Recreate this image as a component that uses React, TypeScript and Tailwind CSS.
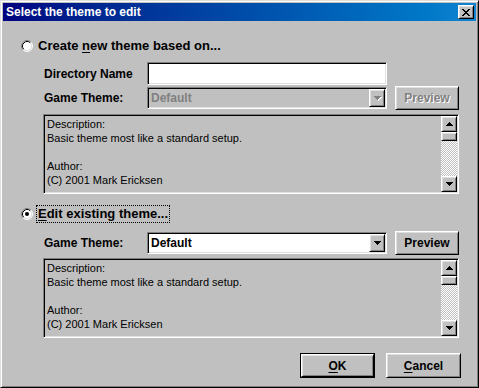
import React from "react";

const raised =
  "border border-t-white border-l-white border-r-black border-b-black shadow-[inset_1px_1px_0_#dfdfdf,inset_-1px_-1px_0_#808080]";
const sunken =
  "border border-t-[#808080] border-l-[#808080] border-r-white border-b-white shadow-[inset_1px_1px_0_#000,inset_-1px_-1px_0_#dfdfdf] p-[1px]";

// pixel arrow, rows of width 7,5,3,1
function Arrow({ dir, color = "#000" }: { dir: "up" | "down"; color?: string }) {
  const rows = [0, 1, 2, 3];
  return (
    <svg width="7" height="4" viewBox="0 0 7 4" shapeRendering="crispEdges">
      {rows.map((r) => (
        <rect
          key={r}
          x={r}
          y={dir === "down" ? r : 3 - r}
          width={7 - r * 2}
          height={1}
          fill={color}
        />
      ))}
    </svg>
  );
}

function CloseGlyph() {
  const px: [number, number, number][] = [
    [0, 0, 2], [6, 0, 2],
    [1, 1, 2], [5, 1, 2],
    [2, 2, 4],
    [3, 3, 2],
    [2, 4, 4],
    [1, 5, 2], [5, 5, 2],
    [0, 6, 2], [6, 6, 2],
  ];
  return (
    <svg width="8" height="7" viewBox="0 0 8 7" shapeRendering="crispEdges">
      {px.map(([x, y, w], i) => (
        <rect key={i} x={x} y={y} width={w} height={1} fill="#000" />
      ))}
    </svg>
  );
}

function Radio({ checked }: { checked?: boolean }) {
  return (
    <svg width="12" height="12" viewBox="0 0 12 12" className="shrink-0">
      <circle cx="6" cy="6" r="5" fill="#fff" />
      <path d="M2.11 9.89 A5.5 5.5 0 0 1 9.89 2.11" fill="none" stroke="#808080" strokeWidth="1" />
      <path d="M9.89 2.11 A5.5 5.5 0 0 1 2.11 9.89" fill="none" stroke="#fff" strokeWidth="1" />
      <path d="M2.82 9.18 A4.5 4.5 0 0 1 9.18 2.82" fill="none" stroke="#000" strokeWidth="1" />
      <path d="M9.18 2.82 A4.5 4.5 0 0 1 2.82 9.18" fill="none" stroke="#dfdfdf" strokeWidth="1" />
      {checked && <circle cx="6" cy="6" r="2" fill="#000" />}
    </svg>
  );
}

function ScrollBar() {
  return (
    <div className="flex h-full w-[16px] flex-col">
      <div className={`${raised} flex h-[16px] items-center justify-center bg-[#c0c0c0]`}>
        <Arrow dir="up" />
      </div>
      <div className={`${raised} h-[9px] bg-[#c0c0c0]`} />
      <div className="flex-1 bg-[image:repeating-conic-gradient(#c0c0c0_0%_25%,#ffffff_0%_50%)] bg-[length:2px_2px]" />
      <div className={`${raised} flex h-[16px] items-center justify-center bg-[#c0c0c0]`}>
        <Arrow dir="down" />
      </div>
    </div>
  );
}

function DescBox() {
  return (
    <div className={`${sunken} ml-[40px] flex h-[80px] w-[416px] bg-[#c0c0c0]`}>
      <div className="flex-1 pl-[2px] pt-[1px] text-[11px] leading-[14px] text-black">
        <div>Description:</div>
        <div>Basic theme most like a standard setup.</div>
        <div>&nbsp;</div>
        <div>Author:</div>
        <div>(C) 2001 Mark Ericksen</div>
      </div>
      <ScrollBar />
    </div>
  );
}

function Combo({ disabled }: { disabled?: boolean }) {
  return (
    <div
      className={`${sunken} flex h-[22px] w-[240px] items-center ${
        disabled ? "bg-[#c0c0c0]" : "bg-white"
      }`}
    >
      <span
        className={`flex-1 pl-[2px] text-[12px] font-bold ${
          disabled ? "text-[#808080]" : "text-black"
        }`}
      >
        Default
      </span>
      <div className={`${raised} flex h-[18px] w-[16px] items-center justify-center bg-[#c0c0c0]`}>
        {disabled ? (
          <span className="relative block h-[4px] w-[7px]">
            <span className="absolute left-[1px] top-[1px]">
              <Arrow dir="down" color="#fff" />
            </span>
            <span className="absolute left-0 top-0">
              <Arrow dir="down" color="#808080" />
            </span>
          </span>
        ) : (
          <Arrow dir="down" />
        )}
      </div>
    </div>
  );
}

function PreviewButton({ disabled }: { disabled?: boolean }) {
  return (
    <div
      className={`${raised} ml-[8px] flex h-[24px] w-[64px] items-center justify-center bg-[#c0c0c0] text-[12px] font-bold ${
        disabled ? "text-[#808080] [text-shadow:1px_1px_0_#fff]" : "text-black"
      }`}
    >
      Preview
    </div>
  );
}

export default function App() {
  return (
    <div
      className="flex h-[388px] w-[479px] flex-col overflow-hidden border border-t-[#dfdfdf] border-l-[#dfdfdf] border-r-black border-b-black bg-[#c0c0c0] p-[2px] shadow-[inset_1px_1px_0_#fff,inset_-1px_-1px_0_#808080] select-none"
      style={{ fontFamily: '"Liberation Sans", Arial, sans-serif' }}
    >
      {/* title bar */}
      <div className="flex h-[18px] shrink-0 items-center bg-linear-to-r from-[#000080] to-[#1084d0] pl-[3px] pr-[2px]">
        <span className="flex-1 text-[12px] font-bold text-white">Select the theme to edit</span>
        <div className={`${raised} flex h-[14px] w-[16px] items-center justify-center bg-[#c0c0c0]`}>
          <CloseGlyph />
        </div>
      </div>

      <div className="flex flex-col text-black">
        {/* create new */}
        <div className="mt-[17px] flex h-[16px] items-center pl-[18px]">
          <Radio />
          <span className="ml-[5px] text-[13px] font-bold">
            Create <span className="underline underline-offset-2">n</span>ew theme based on...
          </span>
        </div>

        <div className="mt-[8px] flex h-[23px] items-center pl-[41px]">
          <span className="w-[103px] text-[12px] font-bold">Directory Name</span>
          <div className={`${sunken} h-[23px] w-[240px] bg-white`} />
        </div>

        <div className="mt-[1px] flex h-[24px] items-center pl-[41px]">
          <span className="w-[103px] text-[12px] font-bold">Game Theme:</span>
          <Combo disabled />
          <PreviewButton disabled />
        </div>

        <div className="mt-[4px]">
          <DescBox />
        </div>

        {/* edit existing */}
        <div className="mt-[11px] flex h-[18px] items-center pl-[18px]">
          <Radio checked />
          <span className="ml-[3px] border border-dotted border-black px-[1px] text-[13px] leading-[16px] font-bold">
            <span className="underline underline-offset-2">E</span>dit existing theme...
          </span>
        </div>

        <div className="mt-[8px] flex h-[24px] items-center pl-[41px]">
          <span className="w-[103px] text-[12px] font-bold">Game Theme:</span>
          <Combo />
          <PreviewButton />
        </div>

        <div className="mt-[3px]">
          <DescBox />
        </div>

        {/* buttons */}
        <div className="mt-[15px] flex gap-[11px] pl-[297px]">
          <div className="h-[25px] w-[75px] border border-black">
            <div className={`${raised} flex h-full w-full items-center justify-center bg-[#c0c0c0] text-[12px] font-bold`}>
              <span>
                <span className="underline underline-offset-2">O</span>K
              </span>
            </div>
          </div>
          <div className={`${raised} flex h-[25px] w-[75px] items-center justify-center bg-[#c0c0c0] text-[12px] font-bold`}>
            <span>
              <span className="underline underline-offset-2">C</span>ancel
            </span>
          </div>
        </div>
      </div>
    </div>
  );
}
